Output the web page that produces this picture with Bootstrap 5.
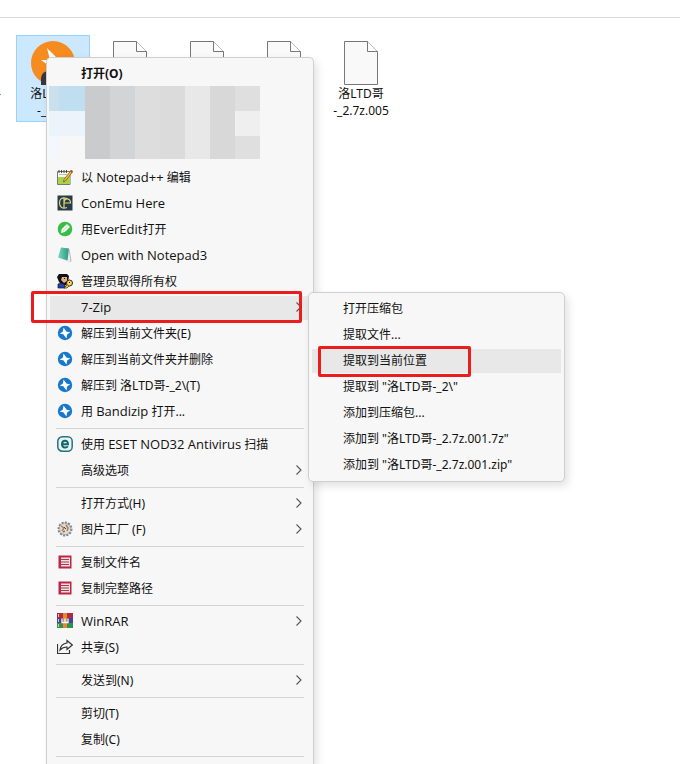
<!DOCTYPE html>
<html lang="zh-CN">
<head>
<meta charset="utf-8">
<meta name="viewport" content="width=device-width, initial-scale=1">
<title>文件资源管理器</title>
<link href="https://cdn.jsdelivr.net/npm/bootstrap@5.3.0/dist/css/bootstrap.min.css" rel="stylesheet">
<style>
body{font-family:"Noto Sans","Noto Sans CJK SC",sans-serif;font-size:12px;line-height:17px;color:#111;background:#fff}
.topbar{height:18px;border-bottom:1px solid #d9d9d9}
.files{gap:3px;padding-top:17px}
.cut-off{width:13px;padding-top:50px;text-indent:-3px}
.file-tile{width:74px;height:87px;padding:3px 0 0;border:1px solid transparent;font-size:12px;line-height:17px;color:#111;background:none}
.file-tile.picked{background:#cce8ff;border-color:#99d1ff}
.file-tile svg{display:block;margin:0 auto}
.ctx{background:#f7f7f7;border:1px solid #cfcfcf;border-radius:5px;box-shadow:3px 4px 8px rgba(0,0,0,.12)}
.ctx-main{left:46px;top:57px;bottom:0;width:268px;padding:3px 3px 0;border-bottom:0;border-radius:5px 5px 0 0}
.ctx-sub{left:258px;top:-3px;width:257px;padding:3px}
.entry{height:26px;gap:8px;padding:0 7px 2px;border:0;background:none;color:#111;text-align:left;white-space:nowrap}
.ctx-sub .entry{padding-left:31px}
.entry.hot{background:linear-gradient(#e8e8e8,#e8e8e8) center/100% 24px no-repeat}
.ico{width:16px;height:16px;flex:none}
.wide{font-family:"Open Sans","Noto Sans",sans-serif;font-size:13px}
.rule{height:1px;margin:3px 6px;background:#d4d4d4}
.frame{border:3px solid #ed1c1c;border-radius:2px;pointer-events:none}
.frame-main{left:-19px;top:-4px;width:271px;height:32px}
.frame-sub{left:6px;top:-2px;width:153px;height:31px}
.mosaic{display:grid;grid-template-columns:10px 26px repeat(7,25px);grid-template-rows:25px 25px 23px;margin:-1px 0 6px -1px}
.mosaic i:nth-child(1){background:#cae0ef}.mosaic i:nth-child(2){background:#bfdef0}
.a{background:#c9cbcd}.b{background:#d3d4d5}.c{background:#dddddd}.d{background:#dbdbdb}.e{background:#e8e8e8}.f{background:#d8d8d8}.g{background:#dfdfdf}.h{background:#efefef}.p{background:#edf3fb}.q{background:#f3f7fb}
</style>
<script src="https://cdn.jsdelivr.net/npm/bootstrap@5.3.0/dist/js/bootstrap.bundle.min.js"></script>
</head>
<body>
<svg class="d-none" xmlns="http://www.w3.org/2000/svg">
<symbol id="doc" viewBox="0 0 34 44"><path d="M.5.5h23l10 10v33H.5z" fill="#f9f9f9" stroke="#777"/><path d="M23.5.5v10h10" fill="#fff" stroke="#777"/></symbol>
<symbol id="bandi" viewBox="0 0 16 16"><circle cx="8" cy="8" r="7.2" fill="#1878cc"/><path d="M6.500 2.500l3.200 4.200 3.600.6-3.200 2.200-.6 4-3.200-4.200-3.600-.6 3.200-2.200z" fill="#fff"/></symbol>
<symbol id="book" viewBox="0 0 16 16"><path d="M1.500 1.500h13v13h-13z" fill="#be2444"/><path d="M4 3.500h9v9H4z" fill="#f3dfe0"/><path d="M3 5.500h9M3 8h9M3 10.500h9" stroke="#a83b4d"/></symbol>
<symbol id="chev" viewBox="0 0 8 12"><path d="M1.500 1.500L6 6l-4.500 4.500" fill="none" stroke="#555" stroke-width="1.100"/></symbol>
</svg>
<main class="position-relative overflow-hidden vh-100">
<div class="topbar"></div>
<div class="files d-flex">
<span class="cut-off">-</span>
<button class="file-tile picked"><svg width="44" height="44" viewBox="0 0 44 44"><circle cx="22" cy="22" r="22" fill="#f68b1f"/><path d="M16 7l9 9 8 3-8 9-4 5-4-9-7-5h9z" fill="#fff"/><path d="M10 44v-7q1-7 8-7h10v14z" fill="#343842"/></svg>洛LTD哥<br>-_2.7z</button>
<button class="file-tile"><svg width="34" height="44"><use href="#doc"/></svg>洛LTD哥<br>-_2.7z.002</button>
<button class="file-tile"><svg width="34" height="44"><use href="#doc"/></svg>洛LTD哥<br>-_2.7z.003</button>
<button class="file-tile"><svg width="34" height="44"><use href="#doc"/></svg>洛LTD哥<br>-_2.7z.004</button>
<button class="file-tile"><svg width="34" height="44"><use href="#doc"/></svg>洛LTD哥<br>-_2.7z.005</button>
</div>
<div class="ctx ctx-main position-absolute">
<button class="entry d-flex align-items-center w-100 fw-bold"><span class="ico"></span>打开(O)</button>
<div class="mosaic" aria-hidden="true">
<i></i><i></i><i class="a"></i><i class="b"></i><i class="c"></i><i class="d"></i><i class="e"></i><i class="f"></i><i class="g"></i>
<i class="p"></i><i class="p"></i><i class="a"></i><i class="b"></i><i class="c"></i><i class="d"></i><i class="e"></i><i class="f"></i><i class="h"></i>
<i class="q"></i><i></i><i class="a"></i><i class="b"></i><i class="c"></i><i class="d"></i><i class="e"></i><i class="f"></i><i class="g"></i>
</div>
<button class="entry d-flex align-items-center w-100"><svg class="ico" viewBox="0 0 16 16"><path d="M.5 2.500h12.500v13H.5z" fill="#f8faf0" stroke="#777"/><path d="M1 8h12v7H1z" fill="#a5d34e"/><path d="M2 5.500h8" stroke="#b9c0ae"/><path d="M2 1v3M4.500 1v3M7 1v3M9.500 1v3" stroke="#444"/><path d="M14 1.500l1.500 1.500-7 9-2 1 .5-2.500z" fill="#f1bd38" stroke="#8b561b" stroke-width=".8"/><path d="M13 2l2-1 .8 1.500-1 1.500z" fill="#bd3f2c"/></svg><span>以 <span class="wide">Notepad++</span> 编辑</span></button>
<button class="entry d-flex align-items-center w-100"><svg class="ico" viewBox="0 0 16 16"><path d="M.5.5h15v15H.5z" fill="#273c4a"/><path d="M10 3.500C5 1.500 2.500 4 2.500 8s3 6.500 7.500 4.500M7 3v10M7 8h6.500C13.500 2.500 7 2.500 7 8" fill="none" stroke="#e3d579" stroke-width="1.200"/></svg><span class="wide">ConEmu Here</span></button>
<button class="entry d-flex align-items-center w-100"><svg class="ico" viewBox="0 0 16 16"><circle cx="8" cy="8" r="7.300" fill="#38bd45"/><path d="M4 12l.7-4L10 3l3 3-5.200 5z" fill="#fff"/><path d="M6 9.500l4.500-4.200" stroke="#9be19e"/></svg><span>用<span class="wide">EverEdit</span>打开</span></button>
<button class="entry d-flex align-items-center w-100"><svg class="ico" viewBox="0 0 16 16"><defs><linearGradient id="teal"><stop stop-color="#79d8bf"/><stop offset="1" stop-color="#299782"/></linearGradient></defs><path d="M4 .5l8 1 2.500 12.500-2 1.500L3 12z" fill="#e8eeee"/><path d="M4 .5l8 1-1.500 12L1 10.500z" fill="url(#teal)"/><path d="M12 2l2 12-1 1" fill="none" stroke="#c8b6b2"/></svg><span class="wide">Open with Notepad3</span></button>
<button class="entry d-flex align-items-center w-100"><svg class="ico" viewBox="0 0 16 16"><path d="M2 1h8l2 2-1 6-2 3H5L2 9 0 4z" fill="#111"/><path d="M5 4h5v4L7 10 4 7z" fill="#e0b184"/><path d="M1 11l4-1 3 2v3H1z" fill="#2741bd" stroke="#111" stroke-width=".7"/><circle cx="12.500" cy="10" r="3" fill="#f6d568" stroke="#382600"/><path d="M10 12l-3 3h3l2-2" fill="#eec442" stroke="#382600" stroke-width=".7"/><path d="M7 5.500h1M12 9.500h1" stroke="#111"/></svg>管理员取得所有权</button>
<div class="position-relative">
<button class="entry hot d-flex align-items-center w-100"><span class="ico"></span><span class="wide">7-Zip</span><svg class="ms-auto" width="8" height="12"><use href="#chev"/></svg></button>
<div class="frame frame-main position-absolute"></div>
<div class="ctx ctx-sub position-absolute">
<button class="entry d-flex align-items-center w-100">打开压缩包</button>
<button class="entry d-flex align-items-center w-100">提取文件...</button>
<div class="position-relative"><button class="entry hot d-flex align-items-center w-100">提取到当前位置</button><div class="frame frame-sub position-absolute"></div></div>
<button class="entry d-flex align-items-center w-100">提取到 "洛LTD哥-_2\"</button>
<button class="entry d-flex align-items-center w-100">添加到压缩包...</button>
<button class="entry d-flex align-items-center w-100">添加到 "洛LTD哥-_2.7z.001.7z"</button>
<button class="entry d-flex align-items-center w-100">添加到 "洛LTD哥-_2.7z.001.zip"</button>
</div>
</div>
<button class="entry d-flex align-items-center w-100"><svg class="ico"><use href="#bandi"/></svg>解压到当前文件夹(E)</button>
<button class="entry d-flex align-items-center w-100"><svg class="ico"><use href="#bandi"/></svg>解压到当前文件夹并删除</button>
<button class="entry d-flex align-items-center w-100"><svg class="ico"><use href="#bandi"/></svg>解压到 洛LTD哥-_2\(T)</button>
<button class="entry d-flex align-items-center w-100"><svg class="ico"><use href="#bandi"/></svg><span>用 <span class="wide">Bandizip</span> 打开...</span></button>
<div class="rule"></div>
<button class="entry d-flex align-items-center w-100"><svg class="ico" viewBox="0 0 16 16"><rect x=".8" y=".8" width="14.400" height="14.400" rx="4.500" fill="#e6f4f3" stroke="#28747c" stroke-width="1.500"/><path d="M5 8.200h6C11 3.500 5 3.600 5 8.200c0 4 4.500 4 5.800 2" fill="none" stroke="#17656e" stroke-width="2"/></svg><span>使用 <span class="wide">ESET NOD32 Antivirus</span> 扫描</span></button>
<button class="entry d-flex align-items-center w-100"><span class="ico"></span>高级选项<svg class="ms-auto" width="8" height="12"><use href="#chev"/></svg></button>
<div class="rule"></div>
<button class="entry d-flex align-items-center w-100"><span class="ico"></span>打开方式(H)<svg class="ms-auto" width="8" height="12"><use href="#chev"/></svg></button>
<button class="entry d-flex align-items-center w-100"><svg class="ico" viewBox="0 0 16 16"><circle cx="8" cy="8" r="6.500" fill="#c4c8ce" stroke="#7e8591" stroke-width="2" stroke-dasharray="2 1.300"/><path d="M3 5l4-2 5 2 1 5-4 3-5-2z" fill="#e6ddd2"/><path d="M4 5l3 2-2 3M9 4l2 3-1 3" fill="none" stroke="#b67b45" stroke-width="1.500"/><path d="M7 6l2 2M6 11l2-1" stroke="#38455e"/></svg>图片工厂 (F)<svg class="ms-auto" width="8" height="12"><use href="#chev"/></svg></button>
<div class="rule"></div>
<button class="entry d-flex align-items-center w-100"><svg class="ico"><use href="#book"/></svg>复制文件名</button>
<button class="entry d-flex align-items-center w-100"><svg class="ico"><use href="#book"/></svg>复制完整路径</button>
<div class="rule"></div>
<button class="entry d-flex align-items-center w-100"><svg class="ico" viewBox="0 0 16 16"><path d="M0 0h16v5H0z" fill="#b02b42"/><path d="M0 5h16v5H0z" fill="#4b3f9c"/><path d="M0 10h16v5H0z" fill="#2b9550"/><path d="M6 0h4v15H6z" fill="#e48a2c"/><path d="M1.500 1v3M1.500 6v3M1.500 11v3" stroke="#e9c4a0"/><path d="M5 5.500v4h6v-4M8 5.500V9" fill="none" stroke="#fff" stroke-width="1.300"/></svg><span class="wide">WinRAR</span><svg class="ms-auto" width="8" height="12"><use href="#chev"/></svg></button>
<button class="entry d-flex align-items-center w-100"><svg class="ico" viewBox="0 0 16 16"><path d="M.5 5v9.500h12V11M10 1.500l5.300 4.500L10 10.500V8C7 8 5 8.800 3 11c.5-4 3-6.500 7-7z" fill="none" stroke="#333" stroke-width="1.200"/></svg>共享(S)</button>
<div class="rule"></div>
<button class="entry d-flex align-items-center w-100"><span class="ico"></span>发送到(N)<svg class="ms-auto" width="8" height="12"><use href="#chev"/></svg></button>
<div class="rule"></div>
<button class="entry d-flex align-items-center w-100"><span class="ico"></span>剪切(T)</button>
<button class="entry d-flex align-items-center w-100"><span class="ico"></span>复制(C)</button>
<div class="rule"></div>
</div>
</main>
</body>
</html>
